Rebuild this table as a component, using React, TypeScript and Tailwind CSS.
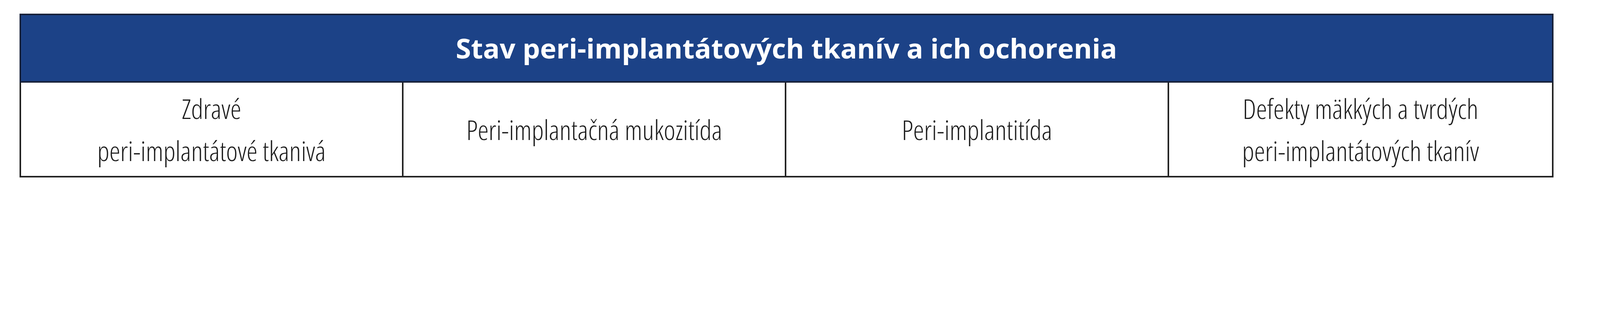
export default function App() {
  const cells = [
    ["Zdravé", "peri-implantátové tkanivá"],
    ["Peri-implantačná mukozitída"],
    ["Peri-implantitída"],
    ["Defekty mäkkých a tvrdých", "peri-implantátových tkanív"],
  ];

  // sizes are in vw so the table keeps the reference proportions at any frame width
  return (
    <div className="bg-white pt-[0.847vw] pb-[2vw] pl-[1.212vw] font-['Open_Sans',sans-serif]">
      <div className="w-[95.88vw]">
        {/* header */}
        <div className="flex h-[4.334vw] items-center justify-center border-[0.116vw] border-[#18223a] bg-[#1c4287]">
          <span className="text-[1.727vw] font-bold leading-none text-white">
            Stav peri-implantátových tkanív a ich ochorenia
          </span>
        </div>

        {/* body row */}
        <div className="grid h-[5.928vw] grid-cols-4 border-[0.116vw] border-t-0 border-[#222]">
          {cells.map((lines, i) => (
            <div
              key={i}
              className={`flex flex-col items-center justify-center text-center ${
                i < 3 ? "border-r-[0.116vw] border-[#222]" : ""
              }`}
            >
              {lines.map((l) => (
                <span
                  key={l}
                  className="text-[1.727vw] font-light leading-[2.624vw] text-[#1d1d1d] font-stretch-[75%]"
                >
                  {l}
                </span>
              ))}
            </div>
          ))}
        </div>
      </div>
    </div>
  );
}
